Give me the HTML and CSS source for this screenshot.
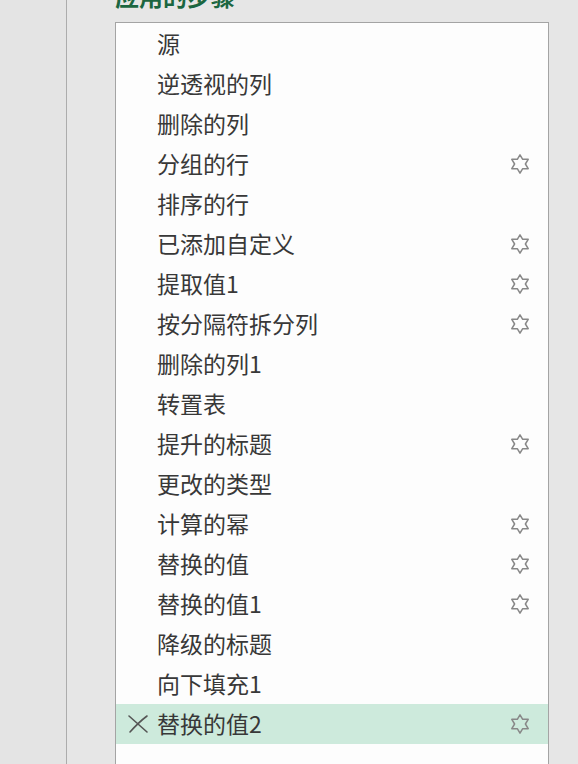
FILE: index.html
```html
<!DOCTYPE html>
<html lang="zh-CN">
<head>
    <meta charset="UTF-8">
    <title>应用的步骤</title>
    <link rel="stylesheet" href="styles.css">
</head>
<body>
    <div class="layout">
        <div class="side"></div>
        <div class="pane">
            <h2 class="pane-title">应用的步骤</h2>
            <ul class="steps">
                <li class="step"><span class="mark"></span><span class="name">源</span></li>
                <li class="step"><span class="mark"></span><span class="name">逆透视的列</span></li>
                <li class="step"><span class="mark"></span><span class="name">删除的列</span></li>
                <li class="step has-gear"><span class="mark"></span><span class="name">分组的行</span><span class="gear"></span></li>
                <li class="step"><span class="mark"></span><span class="name">排序的行</span></li>
                <li class="step has-gear"><span class="mark"></span><span class="name">已添加自定义</span><span class="gear"></span></li>
                <li class="step has-gear"><span class="mark"></span><span class="name">提取值1</span><span class="gear"></span></li>
                <li class="step has-gear"><span class="mark"></span><span class="name">按分隔符拆分列</span><span class="gear"></span></li>
                <li class="step"><span class="mark"></span><span class="name">删除的列1</span></li>
                <li class="step"><span class="mark"></span><span class="name">转置表</span></li>
                <li class="step has-gear"><span class="mark"></span><span class="name">提升的标题</span><span class="gear"></span></li>
                <li class="step"><span class="mark"></span><span class="name">更改的类型</span></li>
                <li class="step has-gear"><span class="mark"></span><span class="name">计算的幂</span><span class="gear"></span></li>
                <li class="step has-gear"><span class="mark"></span><span class="name">替换的值</span><span class="gear"></span></li>
                <li class="step has-gear"><span class="mark"></span><span class="name">替换的值1</span><span class="gear"></span></li>
                <li class="step"><span class="mark"></span><span class="name">降级的标题</span></li>
                <li class="step"><span class="mark"></span><span class="name">向下填充1</span></li>
                <li class="step has-gear selected">
                    <span class="mark">
                        <svg width="22" height="20" viewBox="0 0 22 20"><path d="M2 2 L20 18 M20 2 Q12 8 3 18" fill="none" stroke="#555" stroke-width="1.6" stroke-linecap="round"/></svg>
                    </span>
                    <span class="name">替换的值2</span><span class="gear"></span>
                </li>
                <li class="step"><span class="mark"></span><span class="name"></span></li>
            </ul>
        </div>
    </div>

    <script>
        // 给每个设置按钮画上星形图标
        const gearSvg = '<svg width="20" height="20" viewBox="0 0 20 20">' +
            '<polygon points="10,0.8 12.7,5.3 18.2,5.3 15.4,10 18.2,14.7 12.7,14.7 10,19.2 7.3,14.7 1.8,14.7 4.6,10 1.8,5.3 7.3,5.3" ' +
            'fill="none" stroke="#888" stroke-width="1.5" stroke-linejoin="round"/></svg>';
        document.querySelectorAll('.gear').forEach(g => {
            g.innerHTML = gearSvg;
        });
    </script>
</body>
</html>
```

FILE: styles.css
```css
body {
    margin: 0;
    padding: 0;
    background-color: #e6e6e6;
    font-family: "Noto Sans CJK SC", "Noto Sans", sans-serif;
    overflow: hidden;
}
.layout {
    display: flex;
    height: 764px;
}
.side {
    width: 66px;
    flex-shrink: 0;
    background-color: #e4e4e4;
    border-right: 1px solid #acacac;
}
.pane {
    flex: 1;
    padding-left: 48px;
    overflow: hidden;
}
.pane-title {
    margin: -16px 0 0;
    font-size: 24px;
    line-height: 24px;
    font-weight: bold;
    color: #1b6640;
}
.steps {
    list-style: none;
    margin: 14px 0 0;
    padding: 1px 0 0;
    width: 432px;
    background-color: #fdfdfd;
    border: 1px solid #a4a4a4;
    border-bottom: none;
}
.step {
    display: flex;
    align-items: center;
    height: 40px;
}
.step.selected {
    background-color: #cdeadc;
}
.mark {
    width: 39px;
    flex-shrink: 0;
    display: flex;
    justify-content: center;
    padding-left: 2px;
}
.name {
    flex: 1;
    font-size: 23px;
    color: #383838;
    white-space: nowrap;
    padding-bottom: 2px;
}
.gear {
    width: 20px;
    height: 20px;
    margin-right: 18px;
    display: flex;
}
```
